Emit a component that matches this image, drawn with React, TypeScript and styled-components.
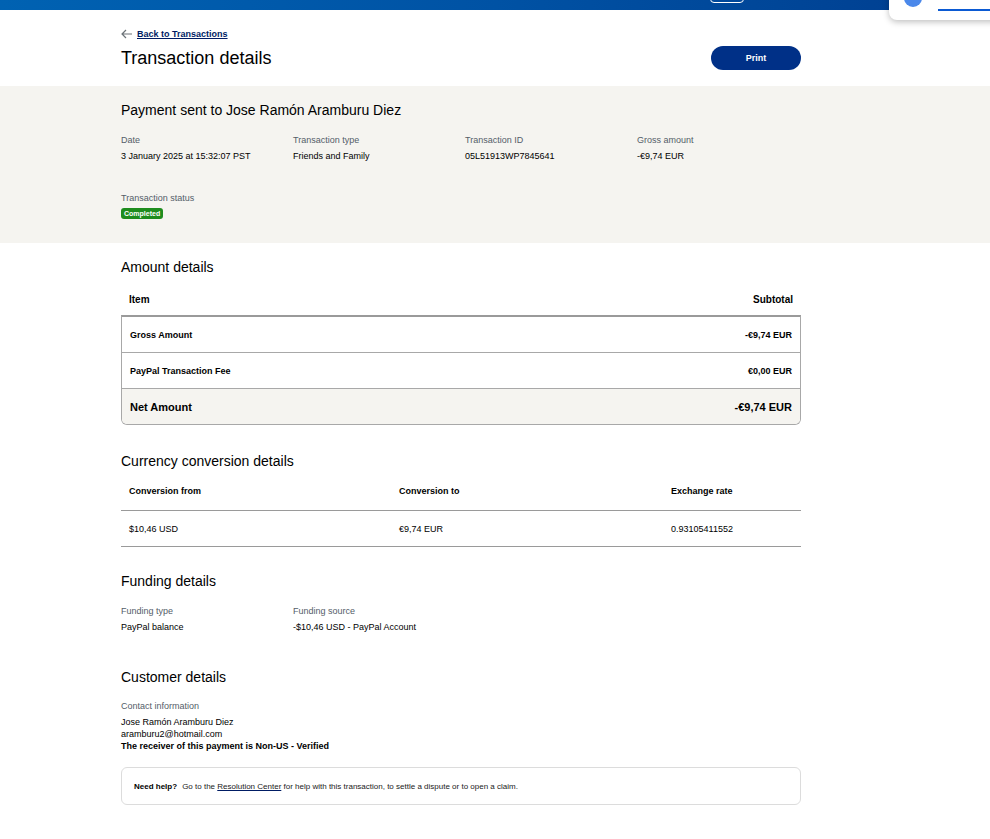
import React from "react";
import styled, { createGlobalStyle } from "styled-components";

const GlobalStyle = createGlobalStyle`
  body {
    margin: 0;
    background: #fff;
    font-family: "Liberation Sans", Arial, sans-serif;
    color: #000;
  }
`;

const Page = styled.div`
  position: relative;
  width: 990px;
  min-height: 839px;
  overflow: hidden;
`;

const TopBar = styled.div`
  position: relative;
  height: 10px;
  background: linear-gradient(90deg, #0062b2 0%, #0052a4 50%, #003d8f 100%);
`;

const TopButtonEdge = styled.div`
  position: absolute;
  left: 710px;
  top: -10px;
  width: 32px;
  height: 11px;
  border: 1px solid #fff;
  border-radius: 4px;
`;

const Popup = styled.div`
  position: absolute;
  left: 889px;
  top: -20px;
  width: 120px;
  height: 40px;
  background: #fff;
  border-radius: 8px;
  box-shadow: 0 2px 6px rgba(0, 0, 0, 0.25);
  overflow: hidden;
`;

const PopupDot = styled.div`
  position: absolute;
  left: 15px;
  top: 9px;
  width: 18px;
  height: 18px;
  border-radius: 50%;
  background: #4b88ea;
`;

const PopupLine = styled.div`
  position: absolute;
  left: 49px;
  top: 29px;
  width: 80px;
  height: 2px;
  background: #0b5ad3;
`;

const Container = styled.div`
  width: 680px;
  margin-left: 121px;
`;

const Header = styled(Container)`
  display: flex;
  justify-content: space-between;
  align-items: flex-end;
  padding-top: 19px;
  padding-bottom: 16px;
`;

const BackLink = styled.a`
  display: flex;
  align-items: center;
  gap: 4px;
  font-size: 9px;
  font-weight: bold;
  color: #001c64;
  text-decoration: underline;
  cursor: pointer;
`;

const Title = styled.h1`
  margin: 7px 0 0;
  font-size: 18px;
  font-weight: normal;
  line-height: 24px;
`;

const PrintButton = styled.button`
  width: 90px;
  height: 24px;
  border: none;
  border-radius: 12px;
  background: #003087;
  color: #fff;
  font-family: inherit;
  font-size: 9px;
  font-weight: bold;
  cursor: pointer;
`;

const SummaryPanel = styled.section`
  background: #f5f4f0;
  padding: 14px 0 24px;
`;

const SummaryTitle = styled.h2`
  margin: 0 0 14px;
  font-size: 14px;
  font-weight: normal;
  line-height: 20px;
`;

const FieldGrid = styled.div<{ cols: number }>`
  display: grid;
  grid-template-columns: repeat(${(p) => p.cols}, 172px);
  row-gap: 30px;
`;

const Field = styled.div`
  display: flex;
  flex-direction: column;
  gap: 4px;
`;

const Label = styled.div`
  font-size: 9px;
  color: #545d68;
  line-height: 12px;
`;

const Value = styled.div`
  font-size: 9px;
  color: #000;
  line-height: 12px;
`;

const Badge = styled.span`
  align-self: flex-start;
  background: #1e8c1e;
  color: #fff;
  font-size: 7px;
  font-weight: bold;
  padding: 2px 3px;
  border-radius: 3px;
  line-height: 7px;
`;

const Section = styled(Container)<{ top: number }>`
  padding-top: ${(p) => p.top}px;
`;

const SectionTitle = styled.h2<{ space?: number }>`
  margin: 0 0 ${(p) => p.space ?? 10}px;
  font-size: 14px;
  font-weight: normal;
  line-height: 16px;
`;

const HeadRow = styled.div<{ cols: string; size: number; h: number; under?: number }>`
  display: grid;
  grid-template-columns: ${(p) => p.cols};
  align-items: center;
  height: ${(p) => p.h}px;
  padding: 0 8px ${(p) => p.under ?? 0}px;
  font-size: ${(p) => p.size}px;
  font-weight: bold;
`;

const AmountTable = styled.div`
  border: 1px solid #a8a8a8;
  border-top: 2px solid #9a9a9a;
  border-radius: 0 0 6px 6px;
  overflow: hidden;
  margin-top: 2px;
`;

const AmountRow = styled.div<{ total?: boolean }>`
  display: flex;
  justify-content: space-between;
  align-items: center;
  height: 35px;
  padding: 0 8px;
  font-size: ${(p) => (p.total ? "11px" : "9px")};
  font-weight: bold;
  background: ${(p) => (p.total ? "#f5f4f0" : "#fff")};
  & + & {
    border-top: 1px solid #a8a8a8;
  }
`;

const ConvTable = styled.div`
  border-top: 1px solid #9a9a9a;
  border-bottom: 1px solid #9a9a9a;
`;

const ConvRow = styled.div`
  display: grid;
  grid-template-columns: 270px 272px 1fr;
  align-items: center;
  height: 35px;
  padding: 0 8px;
  font-size: 9px;
`;

const Lines = styled.div`
  display: flex;
  flex-direction: column;
  font-size: 9px;
  line-height: 12px;
  margin-top: 4px;
`;

const Strong = styled.span`
  font-weight: bold;
`;

const HelpBox = styled.div`
  margin: 15px 0 30px;
  border: 1px solid #dcdcdc;
  border-radius: 6px;
  height: 36px;
  padding: 0 12px;
  display: flex;
  align-items: center;
  font-size: 8px;
  color: #1a1a1a;
  white-space: nowrap;
`;

const HelpTitle = styled.span`
  font-weight: bold;
  color: #000;
  margin-right: 5px;
`;

const HelpLink = styled.a`
  color: #1a1a1a;
  text-decoration: underline;
  text-decoration-color: #001c64;
`;

const ArrowLeft = () => (
  <svg width="12" height="10" viewBox="0 0 12 10" fill="none">
    <path d="M11 5H1.5M5 1L1 5l4 4" stroke="#6c7378" strokeWidth="1.2" />
  </svg>
);

export default function App() {
  return (
    <Page>
      <GlobalStyle />
      <TopBar>
        <TopButtonEdge />
      </TopBar>
      <Popup>
        <PopupDot />
        <PopupLine />
      </Popup>

      <Header>
        <div>
          <BackLink>
            <ArrowLeft />
            Back to Transactions
          </BackLink>
          <Title>Transaction details</Title>
        </div>
        <PrintButton>Print</PrintButton>
      </Header>

      <SummaryPanel>
        <Container>
          <SummaryTitle>Payment sent to Jose Ramón Aramburu Diez</SummaryTitle>
          <FieldGrid cols={4}>
            <Field>
              <Label>Date</Label>
              <Value>3 January 2025 at 15:32:07 PST</Value>
            </Field>
            <Field>
              <Label>Transaction type</Label>
              <Value>Friends and Family</Value>
            </Field>
            <Field>
              <Label>Transaction ID</Label>
              <Value>05L51913WP7845641</Value>
            </Field>
            <Field>
              <Label>Gross amount</Label>
              <Value>-€9,74 EUR</Value>
            </Field>
            <Field>
              <Label>Transaction status</Label>
              <Badge>Completed</Badge>
            </Field>
          </FieldGrid>
        </Container>
      </SummaryPanel>

      <Section top={16}>
        <SectionTitle>Amount details</SectionTitle>
        <HeadRow cols="1fr auto" size={10} h={28}>
          <span>Item</span>
          <span>Subtotal</span>
        </HeadRow>
        <AmountTable>
          <AmountRow>
            <span>Gross Amount</span>
            <span>-€9,74 EUR</span>
          </AmountRow>
          <AmountRow>
            <span>PayPal Transaction Fee</span>
            <span>€0,00 EUR</span>
          </AmountRow>
          <AmountRow total>
            <span>Net Amount</span>
            <span>-€9,74 EUR</span>
          </AmountRow>
        </AmountTable>
      </Section>

      <Section top={28}>
        <SectionTitle space={8}>Currency conversion details</SectionTitle>
        <HeadRow cols="270px 272px 1fr" size={9} h={28} under={5}>
          <span>Conversion from</span>
          <span>Conversion to</span>
          <span>Exchange rate</span>
        </HeadRow>
        <ConvTable>
          <ConvRow>
            <span>$10,46 USD</span>
            <span>€9,74 EUR</span>
            <span>0.93105411552</span>
          </ConvRow>
        </ConvTable>
      </Section>

      <Section top={26}>
        <SectionTitle space={16}>Funding details</SectionTitle>
        <FieldGrid cols={2}>
          <Field>
            <Label>Funding type</Label>
            <Value>PayPal balance</Value>
          </Field>
          <Field>
            <Label>Funding source</Label>
            <Value>-$10,46 USD - PayPal Account</Value>
          </Field>
        </FieldGrid>
      </Section>

      <Section top={36}>
        <SectionTitle space={15}>Customer details</SectionTitle>
        <Label>Contact information</Label>
        <Lines>
          <span>Jose Ramón Aramburu Diez</span>
          <span>aramburu2@hotmail.com</span>
          <Strong>The receiver of this payment is Non-US - Verified</Strong>
        </Lines>
        <HelpBox>
          <HelpTitle>Need help?</HelpTitle>
          Go to the&nbsp;<HelpLink>Resolution Center</HelpLink>&nbsp;for help with this
          transaction, to settle a dispute or to open a claim.
        </HelpBox>
      </Section>
    </Page>
  );
}
